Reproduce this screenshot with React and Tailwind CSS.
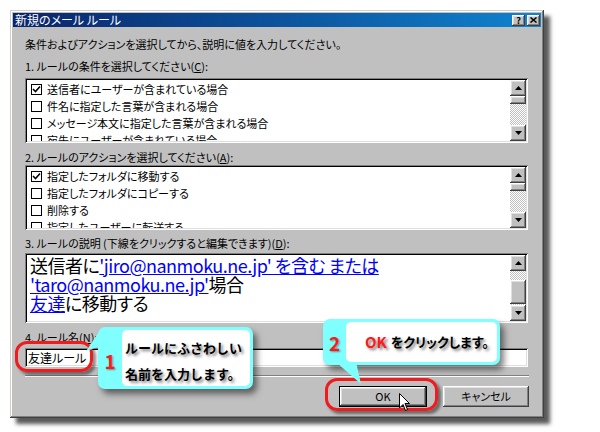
import React from 'react';

const raised = "shadow-[inset_-1px_-1px_#404040,inset_1px_1px_#ffffff,inset_-2px_-2px_#808080,inset_2px_2px_#dfdfdf]";
const sunken = "shadow-[inset_1px_1px_#808080,inset_-1px_-1px_#ffffff,inset_2px_2px_#000000,inset_-2px_-2px_#dfdfdf]";
const checker = "bg-[repeating-conic-gradient(#c0c0c0_0_25%,#ffffff_0_50%)] bg-size-[2px_2px]";

function Arrow({ down }) {
  return (
    <svg width="7" height="4" viewBox="0 0 7 4">
      {down ? <polygon points="0,0 7,0 3.5,4" fill="#000" /> : <polygon points="3.5,0 7,4 0,4" fill="#000" />}
    </svg>
  );
}

function ScrollBar({ gap = 0, thumb = 8 }) {
  return (
    <div className="w-[16px] flex flex-col">
      <div className={`h-[16px] bg-[#c0c0c0] flex items-center justify-center ${raised}`}><Arrow /></div>
      {gap > 0 && <div className={`${checker}`} style={{ height: gap }} />}
      <div className={`bg-[#c0c0c0] ${raised}`} style={{ height: thumb }} />
      <div className={`flex-1 ${checker}`} />
      <div className={`h-[16px] bg-[#c0c0c0] flex items-center justify-center ${raised}`}><Arrow down /></div>
    </div>
  );
}

function Check({ on }) {
  return (
    <span className="w-[11px] h-[11px] border border-black bg-white flex items-center justify-center shrink-0">
      {on && (
        <svg width="9" height="9" viewBox="0 0 9 9">
          <path d="M1 4 L3.5 6.5 L8 1.5" stroke="#000" strokeWidth="1.6" fill="none" />
        </svg>
      )}
    </span>
  );
}

function CheckList({ items }) {
  return (
    <div className={`w-[503px] h-[65px] bg-white p-[2px] flex ${sunken}`}>
      <div className="flex-1 overflow-hidden pt-[1px]">
        {items.map((t, i) => (
          <div key={i} className="h-[17px] flex items-center pl-[4px] whitespace-nowrap">
            <Check on={i === 0} />
            <span className="ml-[5px]">{t}</span>
          </div>
        ))}
      </div>
      <ScrollBar />
    </div>
  );
}

function Label({ children, className = "" }) {
  return <div className={`h-[14px] leading-[14px] ${className}`}>{children}</div>;
}

export default function App() {
  const conds = [
    "送信者にユーザーが含まれている場合",
    "件名に指定した言葉が含まれる場合",
    "メッセージ本文に指定した言葉が含まれる場合",
    "宛先にユーザーが含まれている場合",
  ];
  const actions = [
    "指定したフォルダに移動する",
    "指定したフォルダにコピーする",
    "削除する",
    "指定したユーザーに転送する",
  ];
  const link = "text-[#0000ff] underline";

  return (
    <div className="w-[600px] h-[432px] bg-white pt-[10px] pl-[10px] relative overflow-hidden font-['Noto_Sans_CJK_JP',sans-serif] text-[11px] text-black [font-feature-settings:'palt']">
      {/* dialog window */}
      <div className="w-[534px] h-[408px] bg-[#c0c0c0] p-[3px] flex flex-col shadow-[inset_-1px_-1px_#404040,inset_1px_1px_#d4d0c8,inset_-2px_-2px_#808080,inset_2px_2px_#ffffff,6px_6px_4px_rgba(0,0,0,0.65)]">
        <div className="h-[14px] flex items-center justify-between bg-linear-to-r from-[#0a246a] to-[#1084d0] pl-[2px] pr-[1px]">
          <span className="text-white text-[12px] leading-[14px]">新規のメール ルール</span>
          <div className="flex gap-[2px]">
            <div className={`w-[13px] h-[11px] bg-[#c0c0c0] flex items-center justify-center text-[9px] font-bold leading-none ${raised}`}>?</div>
            <div className={`w-[13px] h-[11px] bg-[#c0c0c0] flex items-center justify-center ${raised}`}>
              <svg width="7" height="6" viewBox="0 0 7 6"><path d="M0.5 0.5 L6.5 5.5 M6.5 0.5 L0.5 5.5" stroke="#000" strokeWidth="1.5" /></svg>
            </div>
          </div>
        </div>

        <div className="flex flex-col px-[12px]">
          <Label className="mt-[10px]">条件およびアクションを選択してから、説明に値を入力してください。</Label>
          <Label className="mt-[8px]">1. ルールの条件を選択してください(<span className="underline">C</span>):</Label>
          <div className="mt-[5px]"><CheckList items={conds} /></div>

          <Label className="mt-[7px]">2. ルールのアクションを選択してください(<span className="underline">A</span>):</Label>
          <div className="mt-[1px]"><CheckList items={actions} /></div>

          <Label className="mt-[6px]">3. ルールの説明 (下線をクリックすると編集できます)(<span className="underline">D</span>):</Label>
          <div className={`mt-[3px] w-[503px] h-[70px] bg-white p-[2px] flex ${sunken}`}>
            <div className="flex-1 overflow-hidden pl-[3px] pt-[1px] text-[18px] leading-[19px] whitespace-nowrap tracking-[-0.5px]">
              <div>送信者に<span className={link}>'jiro@nanmoku.ne.jp' を含む または</span></div>
              <div><span className={link}>'taro@nanmoku.ne.jp'</span>場合</div>
              <div><span className={link}>友達</span>に移動する</div>
            </div>
            <ScrollBar gap={9} thumb={24} />
          </div>

          <Label className="mt-[7px]">4. ルール名(<span className="underline">N</span>):</Label>
          <div className={`mt-[4px] w-[503px] h-[19px] bg-white pl-[3px] flex items-center text-[12px] ${sunken}`}>友達ルール</div>

          <div className="mt-[8px] w-[504px] h-[2px] border-t border-[#808080] border-b border-b-white" />

          <div className="mt-[9px] flex justify-end gap-[16px]">
            <div className="w-[88px] h-[21px] border border-black">
              <div className={`w-full h-full bg-[#c0c0c0] flex items-center justify-center ${raised}`}>OK</div>
            </div>
            <div className={`w-[86px] h-[21px] bg-[#c0c0c0] flex items-center justify-center ${raised}`}>キャンセル</div>
          </div>
        </div>
      </div>

      {/* red highlight rings */}
      <div className="absolute left-[15px] top-[341px] w-[78px] h-[31px] border-[3px] border-[#ee1c1c] rounded-[12px] shadow-[3px_3px_3px_rgba(0,0,0,0.45)]" />
      <div className="absolute left-[325px] top-[378px] w-[113px] h-[33px] border-[3px] border-[#ee1c1c] rounded-[12px] shadow-[3px_3px_3px_rgba(0,0,0,0.45)]" />

      {/* callout 1 */}
      <div className="absolute left-[98px] top-[327px] w-[155px] h-[62px] bg-[#80ffff] rounded-[7px] flex pr-[3px] py-[3px] shadow-[4px_5px_6px_rgba(0,0,0,0.5)]">
        <div className="w-[24px] flex items-center justify-center text-[19px] font-bold text-[#ff1a1a] pt-[6px] [text-shadow:1px_1px_2px_rgba(0,0,0,0.4)]">1</div>
        <div className="flex-1 bg-white rounded-[5px] pl-[3px] pt-[5px] text-[13px] font-bold leading-[26px] [font-feature-settings:normal] [text-shadow:2px_2px_3px_rgba(0,0,0,0.55)]">
          <div>ルールにふさわしい</div>
          <div>名前を入力します。</div>
        </div>
      </div>
      <svg className="absolute left-[84px] top-[327px]" width="20" height="26" viewBox="84 327 20 26">
        <polygon points="101,329 101,346 86,351" fill="#80ffff" />
      </svg>

      {/* callout 2 */}
      <div className="absolute left-[323px] top-[319px] w-[177px] h-[46px] bg-[#80ffff] rounded-[7px] flex pr-[3px] py-[3px] shadow-[4px_5px_6px_rgba(0,0,0,0.5)]">
        <div className="w-[23px] flex items-center justify-center text-[19px] font-bold text-[#ff1a1a] pt-[2px] [text-shadow:1px_1px_2px_rgba(0,0,0,0.4)]">2</div>
        <div className="flex-1 bg-white rounded-[5px] pl-[19px] flex items-center text-[13px] font-bold [text-shadow:2px_2px_3px_rgba(0,0,0,0.55)]">
          <span className="text-[#ff1a1a] text-[15px] mr-[4px]">OK</span>
          <span>をクリックします。</span>
        </div>
      </div>
      <svg className="absolute left-[330px] top-[358px]" width="34" height="28" viewBox="330 358 34 28">
        <polygon points="336,362 356,362 361,384" fill="#80ffff" />
      </svg>

      {/* mouse pointer */}
      <svg className="absolute left-[399px] top-[393px]" width="12" height="19" viewBox="0 0 12 19">
        <path d="M0.5 0.5 L0.5 15 L4 11.5 L6.5 17.5 L8.5 16.5 L6 10.5 L10.5 10.5 Z" fill="#fff" stroke="#000" strokeWidth="1" />
      </svg>
    </div>
  );
}
